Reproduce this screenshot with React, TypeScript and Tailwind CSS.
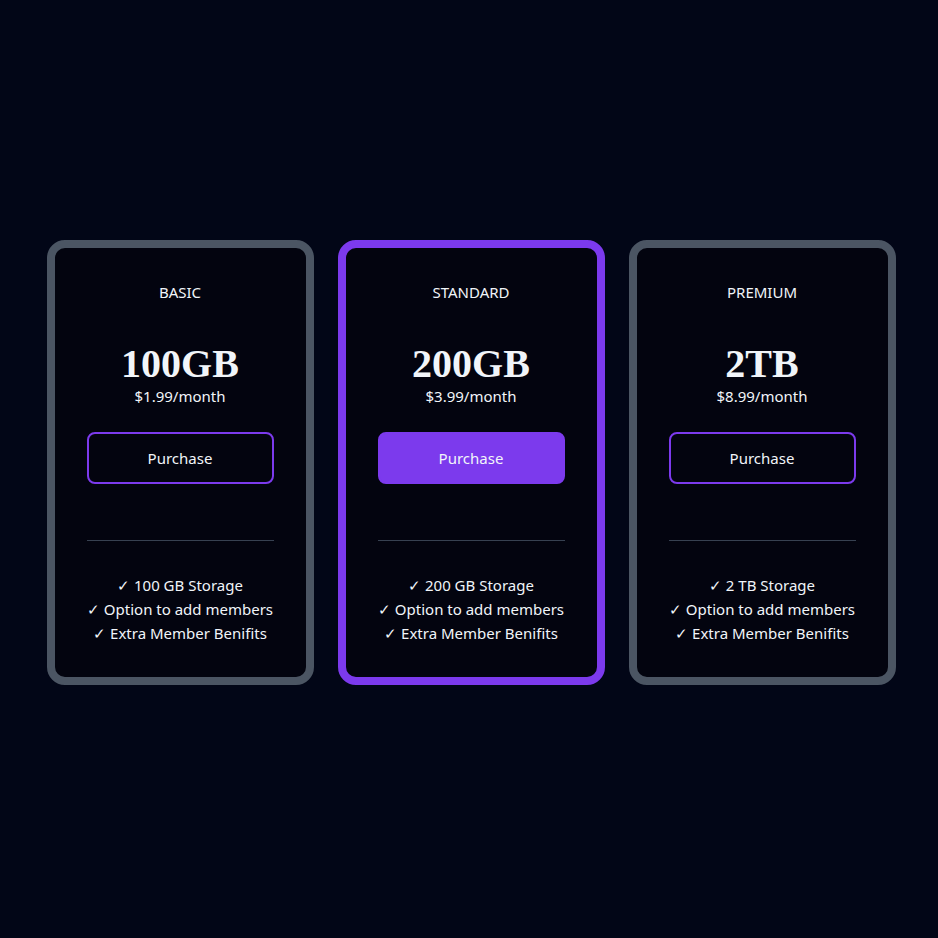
const plans = [
  { name: "BASIC", size: "100GB", price: "$1.99/month", featured: false, features: ["100 GB Storage", "Option to add members", "Extra Member Benifits"] },
  { name: "STANDARD", size: "200GB", price: "$3.99/month", featured: true, features: ["200 GB Storage", "Option to add members", "Extra Member Benifits"] },
  { name: "PREMIUM", size: "2TB", price: "$8.99/month", featured: false, features: ["2 TB Storage", "Option to add members", "Extra Member Benifits"] },
];

export default function App() {
  return (
    <div className="min-h-screen w-full bg-[#020617] pt-[240px] font-['Noto_Sans',sans-serif] text-[#f1f5f9]">
      <div className="flex justify-center gap-6 pl-[4px]">
        {plans.map((plan) => (
          <div
            key={plan.name}
            className={
              plan.featured
                ? "w-[267px] rounded-[18px] border-8 border-[#7c3aed] bg-[#03040f] px-8 py-8 text-center"
                : "w-[267px] rounded-[18px] border-8 border-[#4b5563] bg-[#03040f] px-8 py-8 text-center"
            }
          >
            <p className="text-[15px] leading-6">{plan.name}</p>
            <h2 className="mt-10 font-['Liberation_Serif',serif] text-[40px] font-bold leading-10">{plan.size}</h2>
            <p className="text-[15px] leading-6">{plan.price}</p>
            {plan.featured ? (
              <button className="mt-6 h-[52px] w-full rounded-lg border-2 border-[#7c3aed] bg-[#7c3aed] text-[15px]">Purchase</button>
            ) : (
              <button className="mt-6 h-[52px] w-full rounded-lg border-2 border-[#7c3aed] text-[15px]">Purchase</button>
            )}
            <div className="mt-14 h-px w-full bg-[#374151]" />
            <ul className="mt-8 whitespace-nowrap text-[15px] leading-6">
              {plan.features.map((f) => (
                <li key={f}>✓ {f}</li>
              ))}
            </ul>
          </div>
        ))}
      </div>
    </div>
  );
}
